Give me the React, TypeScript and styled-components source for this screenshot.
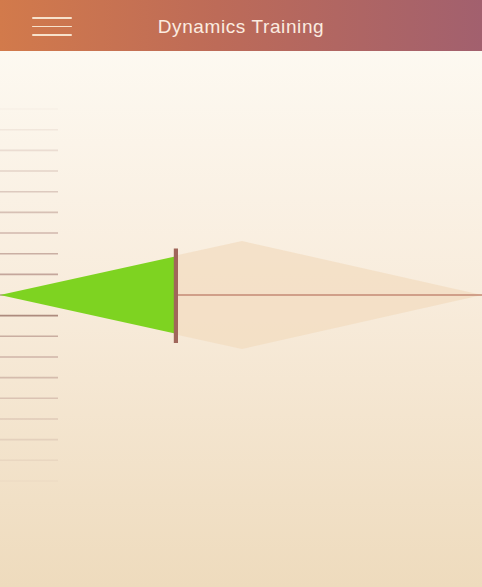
import React from 'react'
import styled, { createGlobalStyle } from 'styled-components'

const GlobalStyle = createGlobalStyle`
  html, body {
    margin: 0;
    padding: 0;
    height: 100%;
  }
  body {
    font-family: 'Liberation Sans', Arial, sans-serif;
  }
`

const TICK_GAP = 20.66
const CENTER_Y = 244
const ticks = Array.from({ length: 19 }, (_, i) => i - 9)

const Hamburger: React.FC = () => (
  <MenuButton aria-label="menu">
    <span />
    <span />
    <span />
  </MenuButton>
)

const Gauge: React.FC = () => (
  <svg width="482" height="536" viewBox="0 0 482 536">
    {ticks.map(k => (
      <line
        key={k}
        x1={0}
        x2={58}
        y1={CENTER_Y + k * TICK_GAP}
        y2={CENTER_Y + k * TICK_GAP}
        stroke={k === 1 ? '#9c7468' : '#b8968c'}
        strokeWidth={1.6}
        opacity={Math.max(0.05, 0.9 - Math.abs(k) * 0.095)}
      />
    ))}
    <polygon points="178,204 242,190 482,244 242,298 178,284" fill="#f2dcbf" opacity={0.7} />
    <line x1={178} x2={482} y1={CENTER_Y} y2={CENTER_Y} stroke="#c48a74" strokeWidth={1.4} />
    <polygon points="0,244 175,205.5 175,282.5" fill="#7ed321" />
    <rect x={173.8} y={197.5} width={4.2} height={94.5} fill="#a0665a" />
  </svg>
)

const App: React.FC = () => (
  <Page>
    <GlobalStyle />
    <Header>
      <Hamburger />
      <Title>Dynamics Training</Title>
    </Header>
    <Stage>
      <Gauge />
    </Stage>
  </Page>
)

const Page = styled.div`
  width: 482px;
  height: 587px;
  display: flex;
  flex-direction: column;
  overflow: hidden;
`

const Header = styled.header`
  height: 51px;
  flex-shrink: 0;
  position: relative;
  display: flex;
  align-items: center;
  justify-content: center;
  background: linear-gradient(to right, #d27a4b 0%, #bd6b58 45%, #a2606e 100%);
`

const MenuButton = styled.button`
  position: absolute;
  left: 32px;
  top: 17px;
  width: 40px;
  height: 19px;
  padding: 0;
  border: none;
  background: none;
  display: flex;
  flex-direction: column;
  justify-content: space-between;
  span {
    display: block;
    height: 1.6px;
    background: #f7e2cc;
    border-radius: 1px;
  }
`

const Title = styled.h1`
  margin: 0;
  padding-top: 2px;
  font-family: 'Liberation Sans', Arial, sans-serif;
  font-weight: 400;
  font-size: 19px;
  letter-spacing: 0.6px;
  color: #fbece0;
`

const Stage = styled.main`
  flex: 1;
  background: linear-gradient(to bottom, #fdf9f1 0%, #f8ecdc 45%, #eedbbd 100%);
  svg {
    display: block;
  }
`

export default App
